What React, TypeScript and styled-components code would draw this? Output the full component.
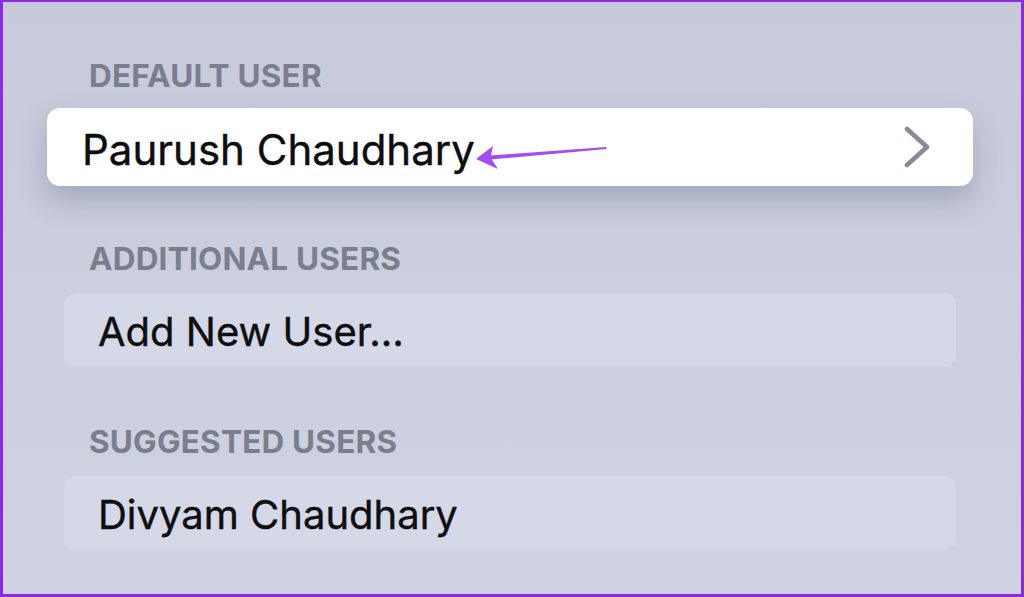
import { FC } from 'react';
import styled, { createGlobalStyle } from 'styled-components';

const GlobalStyle = createGlobalStyle`
  html, body {
    margin: 0;
    padding: 0;
    background: #c9cddc;
  }
  * {
    box-sizing: border-box;
  }
`;

const Screen = styled.div`
  position: relative;
  width: 1024px;
  height: 597px;
  overflow: hidden;
  border-style: solid;
  border-color: #8a2be2;
  border-width: 2px 3px 3px 3px;
  background: linear-gradient(180deg, #c6cadb 0%, #cbcfde 55%, #ced2e1 100%);
  font-family: Inter, 'Liberation Sans', sans-serif;
  padding: 56px 65px 0 61px;
  display: flex;
  flex-direction: column;
  gap: 57px;
`;

const Section = styled.section`
  display: flex;
  flex-direction: column;
  gap: 16px;
`;

const SectionTitle = styled.div`
  font-size: 31.5px;
  line-height: 36px;
  font-weight: 700;
  color: #7b7e8c;
  letter-spacing: 0.2px;
  padding-left: 25px;
  text-transform: uppercase;
`;

const Row = styled.div<{ $focused?: boolean }>`
  display: flex;
  align-items: center;
  justify-content: space-between;
  height: ${(p) => (p.$focused ? '78px' : '74px')};
  margin: ${(p) => (p.$focused ? '-2px -17px' : '0')};
  padding: ${(p) => (p.$focused ? '0 42px 0 35px' : '0 34px')};
  border-radius: ${(p) => (p.$focused ? '13px' : '12px')};
  background: ${(p) => (p.$focused ? '#ffffff' : '#d4d8e7')};
  box-shadow: ${(p) => (p.$focused ? '0 14px 28px rgba(70, 76, 102, 0.28)' : 'none')};
  color: #0e0e11;
`;

const RowLabel = styled.span<{ $focused?: boolean }>`
  font-size: ${(p) => (p.$focused ? '42px' : '40px')};
  font-weight: 400;
  -webkit-text-stroke: 0.4px #0e0e11;
  padding-top: ${(p) => (p.$focused ? '5px' : '2px')};
  white-space: nowrap;
`;

const Chevron = styled.svg`
  width: 28px;
  height: 42px;
  flex-shrink: 0;
`;

const Annotation = styled.svg`
  position: absolute;
  left: 467px;
  top: 136px;
  width: 145px;
  height: 32px;
`;

const ChevronIcon: FC = () => (
  <Chevron viewBox='0 0 28 42'>
    <path d='M4 3 L24 21 L4 39' fill='none' stroke='#878a97' strokeWidth='4.6' strokeLinecap='round' strokeLinejoin='round' />
  </Chevron>
);

const users = {
  defaultUser: 'Paurush Chaudhary',
  suggested: ['Divyam Chaudhary'],
};

export default function App() {
  return (
    <>
      <GlobalStyle />
      <Screen>
        <Section>
          <SectionTitle>Default User</SectionTitle>
          <Row $focused>
            <RowLabel $focused>{users.defaultUser}</RowLabel>
            <ChevronIcon />
          </Row>
        </Section>
        <Section>
          <SectionTitle>Additional Users</SectionTitle>
          <Row>
            <RowLabel>Add New User…</RowLabel>
          </Row>
        </Section>
        <Section>
          <SectionTitle>Suggested Users</SectionTitle>
          {users.suggested.map((name) => (
            <Row key={name}>
              <RowLabel>{name}</RowLabel>
            </Row>
          ))}
        </Section>
        {/* purple pointer added on top of the screenshot */}
        <Annotation viewBox='0 0 145 32'>
          <polygon points='20,17.5 136,9 136.6,11 20,21.5' fill='#a24cf2' />
          <polygon points='6,21 23,8 20.5,19.5 28,31' fill='#a24cf2' />
        </Annotation>
      </Screen>
    </>
  );
}
